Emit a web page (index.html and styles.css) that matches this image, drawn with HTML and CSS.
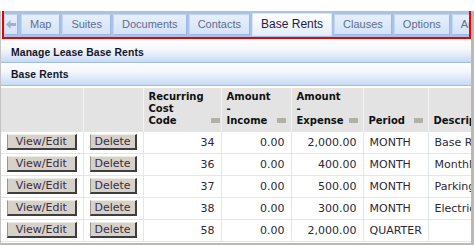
FILE: index.html
```html
<!DOCTYPE html>
<html>
<head>
<meta charset="utf-8">
<link rel="stylesheet" href="styles.css">
</head>
<body>
<div class="frame">
  <div class="tabbar">
    <span class="tab arrow"><svg width="10" height="9" viewBox="0 0 10 9"><path d="M0 4.5 L4.5 0 L4.5 3 L10 3 L10 6 L4.5 6 L4.5 9 Z" fill="#9fb2cc"/></svg></span>
    <span class="tab">Map</span>
    <span class="tab">Suites</span>
    <span class="tab">Documents</span>
    <span class="tab">Contacts</span>
    <span class="tab active">Base Rents</span>
    <span class="tab">Clauses</span>
    <span class="tab">Options</span>
    <span class="tab">Amendments</span>
  </div>
  <div class="band first">Manage Lease Base Rents</div>
  <div class="band second">Base Rents</div>
  <table class="grid">
    <colgroup>
      <col class="c1"><col class="c2"><col class="c3"><col class="c4"><col class="c5"><col class="c6"><col class="c7">
    </colgroup>
    <thead>
      <tr>
        <th></th>
        <th></th>
        <th class="h3"><div>Recurring</div><div>Cost</div><div class="last">Code<span class="sort"></span></div></th>
        <th><div>Amount</div><div>-</div><div class="last">Income<span class="sort"></span></div></th>
        <th><div>Amount</div><div>-</div><div class="last">Expense<span class="sort"></span></div></th>
        <th><div class="last">Period<span class="sort"></span></div></th>
        <th><div class="last">Description</div></th>
      </tr>
    </thead>
    <tbody>
      <tr><td class="btn"><button>View/Edit</button></td><td class="btn"><button>Delete</button></td><td class="num">34</td><td class="num">0.00</td><td class="num">2,000.00</td><td>MONTH</td><td>Base Rent</td></tr>
      <tr><td class="btn"><button>View/Edit</button></td><td class="btn"><button>Delete</button></td><td class="num">36</td><td class="num">0.00</td><td class="num">400.00</td><td>MONTH</td><td>Monthly Rent</td></tr>
      <tr><td class="btn"><button>View/Edit</button></td><td class="btn"><button>Delete</button></td><td class="num">37</td><td class="num">0.00</td><td class="num">500.00</td><td>MONTH</td><td>Parking</td></tr>
      <tr><td class="btn"><button>View/Edit</button></td><td class="btn"><button>Delete</button></td><td class="num">38</td><td class="num">0.00</td><td class="num">300.00</td><td>MONTH</td><td>Electricity</td></tr>
      <tr><td class="btn"><button>View/Edit</button></td><td class="btn"><button>Delete</button></td><td class="num">58</td><td class="num">0.00</td><td class="num">2,000.00</td><td>QUARTER</td><td></td></tr>
    </tbody>
  </table>
</div>
</body>
</html>
```
FILE: styles.css
```css
html, body {
  margin: 0;
  padding: 0;
  background: #ffffff;
}
body {
  width: 474px;
  height: 246px;
  overflow: hidden;
  font-family: "DejaVu Sans", Verdana, sans-serif;
}
.frame {
  margin-top: 11px;
  width: 470px;
  height: 232px;
  border-left: 1px solid #c4c4c4;
  border-right: 3px solid #bcb9b2;
  border-bottom: 2px solid #bcb9b2;
  overflow: hidden;
}
.tabbar {
  margin: 0 2px 0 3px;
  height: 26px;
  background: #a8c3ea;
  outline: 2px solid #ee0000;
  display: flex;
  align-items: flex-start;
  gap: 2px;
  padding: 3px 0 0 0;
  box-sizing: border-box;
  overflow: hidden;
  white-space: nowrap;
}
.tab {
  flex: none;
  height: 21px;
  box-sizing: border-box;
  border: 1px solid #c3d6f1;
  border-bottom-color: #9db9e3;
  border-right-color: #9db9e3;
  background: linear-gradient(#e6effc, #d5e3f7);
  padding: 0 8px;
  font-family: "Liberation Sans", Arial, sans-serif;
  font-size: 11px;
  line-height: 19px;
  color: #5d6e8e;
}
.tab.arrow {
  width: 14px;
  padding: 0;
  display: flex;
  align-items: center;
  justify-content: center;
  margin-right: 1px;
}
.tab.active {
  height: 23px;
  margin-top: -1px;
  background: linear-gradient(#ffffff, #e4eefb);
  color: #25194f;
  font-size: 12px;
  border-color: #d8e6f8;
  line-height: 21px;
}
.band {
  height: 20px;
  box-sizing: border-box;
  border-bottom: 1px solid #9fbde8;
  background: linear-gradient(#fcfcfd 0%, #f4f7fb 35%, #c7daf4 100%);
  padding-left: 10px;
  font-family: "Liberation Sans", Arial, sans-serif;
  font-size: 10.4px;
  letter-spacing: 0.1px;
  font-weight: bold;
  line-height: 19px;
  color: #16162a;
}
.band.first {
  margin-top: 6px;
}
.band.second {
  margin-top: 1px;
  height: 22px;
  line-height: 21px;
}
.grid {
  margin-top: 2px;
  border-collapse: collapse;
  table-layout: fixed;
  width: 560px;
  font-size: 11px;
  color: #2c2838;
}
.c1 { width: 82px; }
.c2 { width: 60px; }
.c3 { width: 78px; }
.c4 { width: 70px; }
.c5 { width: 72px; }
.c6 { width: 65px; }
.c7 { width: 133px; }
.grid th {
  background: #e3e3e3;
  border-left: 1px solid #f3f3f3;
  height: 43px;
  box-sizing: border-box;
  vertical-align: bottom;
  text-align: left;
  padding: 0 5px 4px 5px;
  font-size: 10px;
  font-weight: bold;
  line-height: 12px;
  color: #111111;
}
.grid th:first-child { border-left: none; }
.grid th.h3 { padding-right: 1px; }
.grid th .last {
  display: flex;
  justify-content: space-between;
  align-items: center;
}
.sort {
  display: inline-block;
  width: 9px;
  height: 5px;
  background: #b3b0a6;
  margin-left: 4px;
}
.grid td {
  height: 22px;
  box-sizing: border-box;
  border-top: 1px solid #e1e7f2;
  border-bottom: 1px solid #e1e7f2;
  border-left: 1px solid #e1e7f2;
  padding: 0 6px;
  white-space: nowrap;
  overflow: hidden;
}
.grid td:first-child { border-left: none; }
.grid td.num { text-align: right; padding-right: 6px; }
.grid td.btn { text-align: center; padding: 0; }
.grid button {
  font-family: "DejaVu Sans", Verdana, sans-serif;
  font-size: 11px;
  color: #3a2d48;
  background: #d6d2ca;
  height: 16px;
  padding: 0;
  border-style: solid;
  border-width: 1px 2px 2px 1px;
  border-color: #eeece6 #3e3e3e #3e3e3e #9a968e;
  line-height: 12px;
  vertical-align: middle;
}
.grid td:first-child button { width: 70px; }
.grid td:nth-child(2) button { width: 47px; }
```
